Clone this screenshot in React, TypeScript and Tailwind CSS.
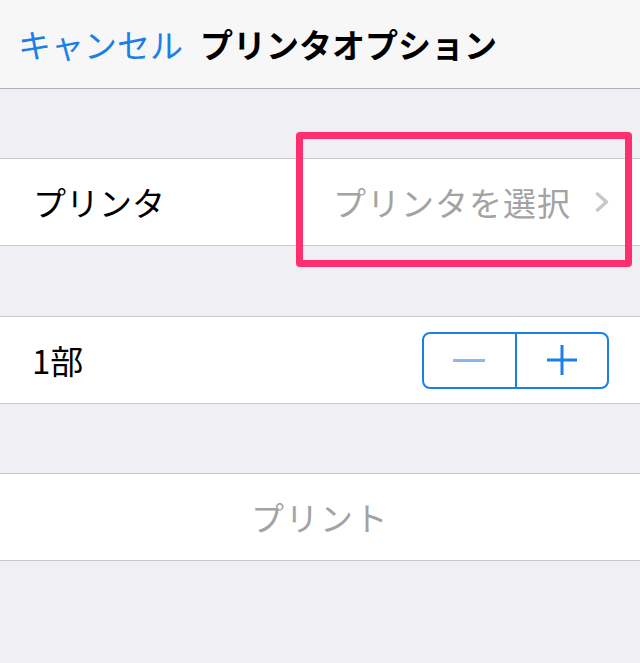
const font = {
  fontFamily: '"Noto Sans CJK JP", "Noto Sans", sans-serif',
};

const App = () => {
  return (
    <div
      className="relative w-[640px] h-[663px] bg-[#efeff4] overflow-hidden"
      style={font}
    >
      {/* nav bar */}
      <div className="h-[89px] bg-[#f7f7f7] border-b border-[#b2b2b2] flex items-center pl-[18px]">
        <span className="text-[33px] leading-none text-[#1a80e8]">キャンセル</span>
        <span className="ml-[17px] text-[33px] leading-none font-bold text-black">
          プリンタオプション
        </span>
      </div>

      {/* printer row */}
      <div className="mt-[69px] h-[88px] bg-white border-y border-[#c8c7cc] flex items-center justify-between pl-[33px] pr-[31px]">
        <span className="text-[33px] leading-none text-black">プリンタ</span>
        <div className="flex items-center gap-[24px]">
          <span className="text-[33px] leading-none tracking-[1px] text-[#a3a3a3]">
            プリンタを選択
          </span>
          <svg width="14" height="20" viewBox="0 0 14 20" fill="none">
            <path
              d="M2.5 2 L11.5 10 L2.5 18"
              stroke="#c7c7cc"
              strokeWidth="3.5"
              strokeLinecap="round"
              strokeLinejoin="round"
            />
          </svg>
        </div>
      </div>

      {/* copies row */}
      <div className="mt-[70px] h-[88px] bg-white border-y border-[#c8c7cc] flex items-center justify-between pl-[32px] pr-[31px]">
        <span className="text-[33px] leading-none text-black">1部</span>
        <div className="flex w-[187px] h-[57px] border-2 border-[#1a7fe6] rounded-[8px]">
          <button className="flex-1 flex items-center justify-center border-r-2 border-[#1a7fe6]">
            <span className="block w-[32px] h-[3px] bg-[#8ab8ee]" />
          </button>
          <button className="flex-1 flex items-center justify-center">
            <svg width="32" height="32" viewBox="0 0 32 32">
              <path d="M16 1 V31 M1 16 H31" stroke="#1a7fe6" strokeWidth="3" />
            </svg>
          </button>
        </div>
      </div>

      {/* print row */}
      <div className="mt-[69px] h-[88px] bg-white border-y border-[#c8c7cc] flex items-center justify-center">
        <span className="text-[33px] leading-none tracking-[1.5px] text-[#a3a3a3]">
          プリント
        </span>
      </div>

      {/* highlight */}
      <div className="absolute left-[296px] top-[132px] w-[336px] h-[135px] border-[7px] border-[#fe2f6e] rounded-[4px]" />
    </div>
  );
};

export default App;
